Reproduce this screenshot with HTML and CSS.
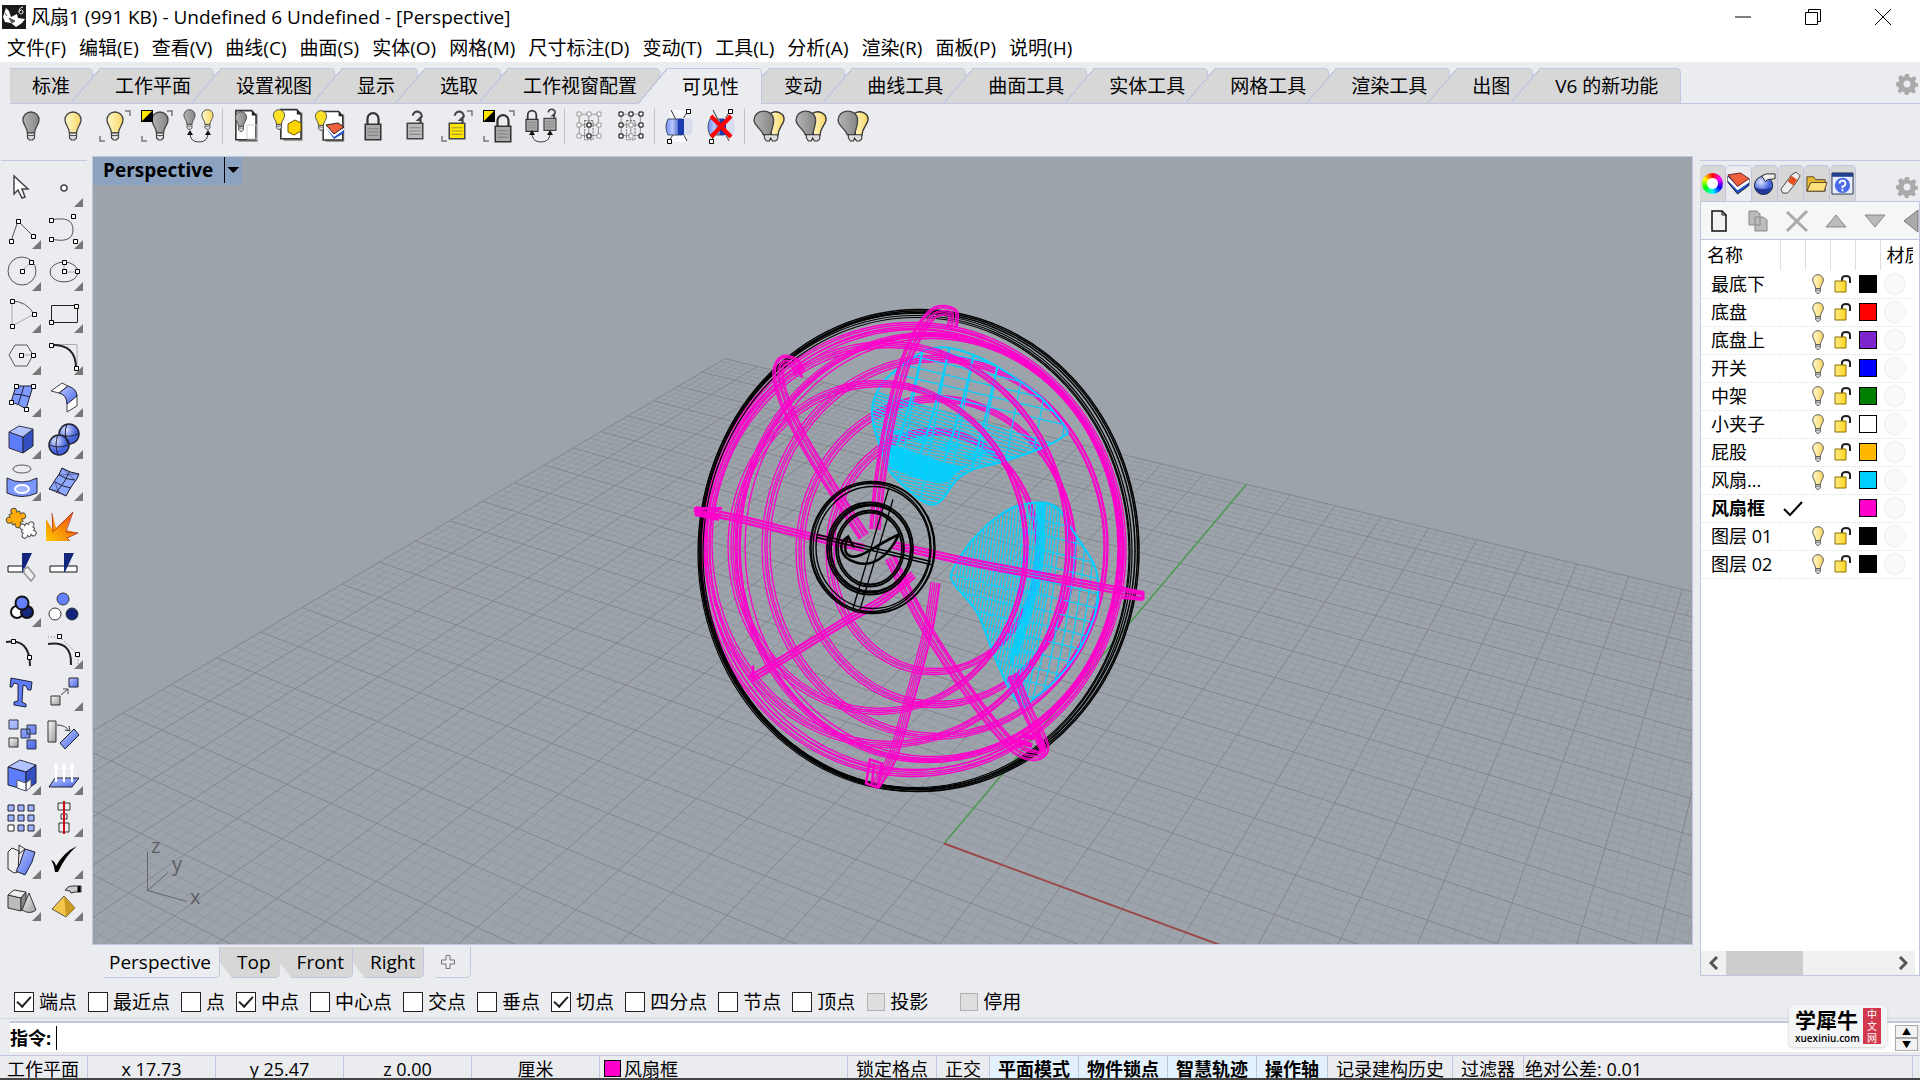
FILE: index.html
```
<!DOCTYPE html>
<html lang="zh-CN">
<head>
  <meta charset="UTF-8" />
  <meta name="viewport" content="width=device-width, initial-scale=1.0"/>
  <title>风扇1 (991 KB) - Undefined 6 Undefined - [Perspective]</title>
  <link rel="stylesheet" href="styles.css">
</head>
<body>
<!-- shared icon parts -->
<svg class="sprite" aria-hidden="true">
  <defs>
    <linearGradient id="g-on"><stop offset="0" stop-color="#fff8cc"/><stop offset="1" stop-color="#f8d765"/></linearGradient>
    <linearGradient id="g-off"><stop offset="0" stop-color="#b4b4b4"/><stop offset="1" stop-color="#868686"/></linearGradient>
    <linearGradient id="g-blue" x2="1" y2="1"><stop offset="0" stop-color="#b9c8ff"/><stop offset="1" stop-color="#4a68e8"/></linearGradient>
    <linearGradient id="g-tube"><stop offset="0" stop-color="#6f8cff"/><stop offset=".4" stop-color="#b9c8ff"/><stop offset="1" stop-color="#1c3bb0"/></linearGradient>
    <linearGradient id="g-grey" x2="1" y2="1"><stop offset="0" stop-color="#fafafa"/><stop offset="1" stop-color="#9a9a9a"/></linearGradient>
    <linearGradient id="g-fire" x1="1" y1="0" x2="0" y2="1"><stop offset="0" stop-color="#f04010"/><stop offset="1" stop-color="#ffc800"/></linearGradient>
    <linearGradient id="g-gold"><stop offset="0" stop-color="#ffe98a"/><stop offset="1" stop-color="#ffd51c"/></linearGradient>
    <radialGradient id="g-ball" cx=".35" cy=".3"><stop offset="0" stop-color="#dfe6ff"/><stop offset="1" stop-color="#4563dd"/></radialGradient>
    <symbol id="pt" viewBox="0 0 5 5"><path d="M.5.5h4v4h-4z" fill="#fff" stroke="#000"/></symbol>
    <symbol id="bulb" viewBox="0 0 18 30"><path d="M9 1C4.500 1 1 4.500 1 9c0 4.500 4 7 4.500 13h7C13 16 17 13.500 17 9c0-4.500-3.500-8-8-8z" stroke="#444" stroke-width="1.300"/><path d="M5.500 22h7v5l-2 2h-3l-2-2z" fill="#ddd" stroke="#444" stroke-width="1.200"/><path d="M6 24.500h6" stroke="#555"/></symbol>
    <symbol id="lock" viewBox="0 0 16 28"><path d="M3 13V7a5 5 0 0 1 10 0v6" fill="none" stroke="#333" stroke-width="2"/><path d="M1 12h14v14H1z" stroke="#333" stroke-width="1.400"/><path d="M3 16h10M3 19h10M3 22h10" stroke="#666" opacity=".6"/></symbol>
    <symbol id="unlock" viewBox="0 0 16 28"><path d="M13 13V9h-2l3-3a4 4 0 0 0-8-1" fill="none" stroke="#444" stroke-width="2"/><path d="M1 12h14v14H1z" stroke="#444" stroke-width="1.400"/><path d="M3 16h10M3 19h10M3 22h10" stroke="#666" opacity=".6"/></symbol>
    <symbol id="page" viewBox="0 0 24 32"><path d="M4 4h18v27H4z" fill="#999"/><path d="M1.500 1.500h15l4 4.500v23h-19z" fill="#fff" stroke="#333" stroke-width="1.500"/><path d="M16.500 1.500V6h4z" fill="#222"/></symbol>
    <symbol id="corners" viewBox="0 0 32 34"><path d="M26 2h5v5M6 32H1v-5" fill="none" stroke="#777" stroke-width="1.500"/></symbol>
    <symbol id="invert" viewBox="0 0 12 12"><path d="M0 0h12v12H0z"/><path d="M1 1h10L1 11z" fill="#ffe600"/></symbol>
    <symbol id="swap" viewBox="0 0 24 14"><path d="M3 3q0 9 9 9t9-9" fill="none" stroke="#444"/><path d="M3 0l3 5H0zM21 0l3 5h-6z" fill="#111"/></symbol>
    <symbol id="cage" viewBox="0 0 30 30"><path d="M3 3h18v20H3zM3 13h18M12 3v20" fill="none" stroke="#999"/><path d="M8 9h8v18H8z" fill="none" stroke="#777" stroke-dasharray="2 1"/></symbol>
    <symbol id="tube" viewBox="0 0 32 34"><path d="M16 9h12q4 8 0 17H16z" fill="#d8dcec"/><path d="M5 10h14v16H5q-4-8 0-16z" fill="url(#g-tube)" stroke="#456"/><path d="M15 10h6v16h-6z" fill="#1c3bb0"/></symbol>
    <symbol id="duo" viewBox="0 0 32 32"><path d="M16 5c6-5 15-1 14 6-1 5-5 6-6 15h-6z" fill="url(#g-on)" stroke="#333" stroke-width="1.300"/><path d="M10 2C5 2 1 6 1 11c0 5 7 8 9 14h7c1-6 3-8 3-14 0-6-5-9-10-9z" fill="url(#g-off)" stroke="#444" stroke-width="1.300"/><path d="M11 25h13v4l-2 2h-3l-2-3-1 3h-3l-2-3z" fill="#ddd" stroke="#333"/></symbol>
    <symbol id="gear" viewBox="0 0 22 22"><path d="M9 1h4l.5 3 2 .8L18 3l2.500 2.500L19 8l.8 2 2.200.4v3l-2.500.6-1 2 1.500 2.400-2.500 2.200-2.500-1.500-2 .8L12 22H9l-.6-2.600-2-.8L4 20.500 1.500 18 3 15.500 2 13.500 0 13V9.500L2.500 9l.8-2L2 4.500 4.500 2 7 3.800l1.500-.6z" fill="#aaa" fill-rule="evenodd"/><circle cx="11" cy="11" r="3.500" fill="#ebecf0"/></symbol>
    <symbol id="sunlock" viewBox="0 0 18 20"><path d="M8 7V5c0-4 8-4 8 0v4" fill="none" stroke="#222" stroke-width="2"/><path d="M1 7h11v11H1z" fill="url(#g-gold)" stroke="#8a7000"/></symbol>
    <g id="piece"><path d="M-5-5H5V5H-5z"/><circle cy="-7" r="2.500"/><circle cy="7" r="2.500"/><circle cx="-7" r="2.500"/><circle cx="7" r="2.500"/></g>
  </defs>
</svg>

<div class="app">
  <header class="title-bar">
    <svg class="app-icon" viewBox="0 0 24 24"><path d="M0 0h24v24H0z" fill="#1a1a1a"/><path d="M1 12L4 3l3 3 2 6 6-3 1 4 7 1-3 4-6 4-5-4-6-1z" fill="#fff"/><path d="M7 13l6 3-3 2zM3 8l2 3" fill="#555" stroke="#555"/><path d="M21 2c-3 0-4 3-4 5s4 3 4 0-3-2-4 0" fill="none" stroke="#fff"/></svg>
    <h1>风扇1 (991 KB) - Undefined 6 Undefined - [Perspective]</h1>
    <div class="window-buttons">
      <button aria-label="最小化"><svg viewBox="0 0 16 16"><path d="M0 8h16"/></svg></button>
      <button aria-label="还原"><svg viewBox="0 0 16 16"><path d="M.5 3.500h12v12H.5zM3.500 3.500v-3h12v12h-3"/></svg></button>
      <button aria-label="关闭"><svg viewBox="0 0 16 16"><path d="M0 0l16 16M16 0L0 16"/></svg></button>
    </div>
  </header>

  <nav class="menu-bar">
    <button>文件(F)</button><button>编辑(E)</button><button>查看(V)</button><button>曲线(C)</button><button>曲面(S)</button><button>实体(O)</button><button>网格(M)</button><button>尺寸标注(D)</button><button>变动(T)</button><button>工具(L)</button><button>分析(A)</button><button>渲染(R)</button><button>面板(P)</button><button>说明(H)</button>
  </nav>

  <div class="toolbar-area">
    <div class="toolbar-tabs">
      <button>标准</button><button>工作平面</button><button>设置视图</button><button>显示</button><button>选取</button><button>工作视窗配置</button><button class="active">可见性</button><button>变动</button><button>曲线工具</button><button>曲面工具</button><button>实体工具</button><button>网格工具</button><button>渲染工具</button><button>出图</button><button>V6 的新功能</button>
      <svg class="gear"><use href="#gear"/></svg>
    </div>
    <div class="toolbar">
      <button aria-label="隐藏"><svg viewBox="0 0 36 36"><use href="#bulb" x="8" y="3" width="20" height="30" fill="url(#g-off)"/></svg></button>
      <button aria-label="显示"><svg viewBox="0 0 36 36"><use href="#bulb" x="8" y="3" width="20" height="30" fill="url(#g-on)"/></svg></button>
      <button aria-label="显示选取"><svg viewBox="0 0 36 36"><use href="#corners" x="2" y="1" width="32" height="34"/><use href="#bulb" x="8" y="3" width="20" height="30" fill="url(#g-on)"/></svg></button>
      <button aria-label="隐藏未选取"><svg viewBox="0 0 36 36"><use href="#corners" x="2" y="1" width="32" height="34"/><use href="#bulb" x="11" y="3" width="20" height="30" fill="url(#g-off)"/><use href="#invert" x="2" y="2" width="12" height="12"/></svg></button>
      <button aria-label="对调隐藏"><svg viewBox="0 0 36 36"><use href="#bulb" x="2" y="1" width="13" height="21" fill="url(#g-off)"/><use href="#bulb" x="20" y="1" width="13" height="21" fill="url(#g-on)"/><use href="#swap" x="6" y="22" width="24" height="14"/></svg></button>
      <i></i>
      <button aria-label="在图纸隐藏"><svg viewBox="0 0 36 36"><use href="#page" x="5" y="1" width="26" height="34"/><path d="M18 17h10v14H18z" fill="none" stroke="#ccc"/><use href="#bulb" x="5" y="3" width="14" height="21" fill="url(#g-off)"/></svg></button>
      <button aria-label="在图纸显示"><svg viewBox="0 0 36 36"><use href="#page" x="7" y="0" width="28" height="34"/><path d="M17 16l7-4 6 3v8l-7 4-6-3z" fill="#ffd500" stroke="#665500"/><use href="#bulb" x="1" y="1" width="14" height="21" fill="#ffe228"/></svg></button>
      <button aria-label="图层显示"><svg viewBox="0 0 36 36"><use href="#page" x="7" y="2" width="28" height="33"/><path d="M13 17l12-2 6 4-10 7z" fill="#f0603c" stroke="#222"/><path d="M13 18l8 9 10-7v2l-10 7z" fill="#fff"/><path d="M13 20l8 9 10-7v3l-10 6z" fill="#2350c8"/><use href="#bulb" x="1" y="2" width="14" height="21" fill="#ffe228"/></svg></button>
      <button aria-label="锁定"><svg viewBox="0 0 36 36"><use href="#lock" x="9" y="3" width="18" height="31" fill="#aaa"/></svg></button>
      <button aria-label="解除锁定"><svg viewBox="0 0 36 36"><use href="#unlock" x="9" y="2" width="18" height="31" fill="#bbb"/></svg></button>
      <button aria-label="解除选取锁定"><svg viewBox="0 0 36 36"><use href="#corners" x="2" y="1" width="32" height="34"/><use href="#unlock" x="9" y="2" width="18" height="31" fill="#ffe600"/></svg></button>
      <button aria-label="锁定未选取"><svg viewBox="0 0 36 36"><use href="#corners" x="2" y="1" width="32" height="34"/><use href="#lock" x="13" y="5" width="18" height="31" fill="#aaa"/><use href="#invert" x="2" y="2" width="12" height="12"/></svg></button>
      <button aria-label="对调锁定"><svg viewBox="0 0 36 36"><use href="#lock" x="2" y="1" width="14" height="24" fill="#aaa"/><use href="#unlock" x="20" y="0" width="14" height="24" fill="#aaa"/><use href="#swap" x="6" y="22" width="24" height="14"/></svg></button>
      <i></i>
      <button aria-label="隐藏控制点"><svg viewBox="0 0 36 36"><use href="#cage" x="5" y="3" width="32" height="32"/><g fill="#fff" stroke="#999"><path d="M6 4h4v4H6zM16 4h4v4h-4zM26 4h4v4h-4zM6 15h4v4H6zM26 15h4v4h-4zM6 26h4v4H6zM26 26h4v4h-4z"/><path d="M16 15h4v4h-4zM16 26h4v4h-4z" stroke="#000"/></g></svg></button>
      <button aria-label="显示控制点"><svg viewBox="0 0 36 36"><use href="#cage" x="5" y="3" width="32" height="32"/><g fill="#fff" stroke="#000"><path d="M6 4h4v4H6zM16 4h4v4h-4zM26 4h4v4h-4zM6 15h4v4H6zM26 15h4v4h-4zM6 26h4v4H6zM26 26h4v4h-4z"/><path d="M16 15h4v4h-4zM16 26h4v4h-4z" stroke="#999"/></g></svg></button>
      <i></i>
      <button aria-label="截平面"><svg viewBox="0 0 36 36"><path d="M8 2h18v32H8z" fill="#fff" opacity=".7"/><path d="M27 3L8 33M10 2l16 31" fill="none" stroke="#333"/><use href="#tube" x="2" y="1" width="32" height="34"/><use href="#pt" x="25" y="1" width="5" height="5"/><use href="#pt" x="6" y="31" width="5" height="5"/></svg></button>
      <button aria-label="停用截平面"><svg viewBox="0 0 36 36"><path d="M27 3L8 33M10 2l16 31" fill="none" stroke="#333"/><use href="#tube" x="2" y="1" width="32" height="34"/><use href="#pt" x="25" y="1" width="5" height="5"/><use href="#pt" x="6" y="31" width="5" height="5"/><path d="M8 8l20 21M28 8L8 29" stroke="#f00" stroke-width="4"/></svg></button>
      <i></i>
      <button aria-label="隔离"><svg viewBox="0 0 36 36"><use href="#duo" x="2" y="1" width="33" height="33"/></svg></button>
      <button aria-label="取消隔离"><svg viewBox="0 0 36 36"><use href="#duo" x="2" y="1" width="33" height="33"/></svg></button>
      <button aria-label="隔离锁定"><svg viewBox="0 0 36 36"><use href="#duo" x="2" y="1" width="33" height="33"/></svg></button>
    </div>
  </div>

  <main class="workspace">
    <aside class="palette">
      <button aria-label="选取"><svg viewBox="0 0 36 36"><path d="M10 6v18l4-4 4 8 3-1-3-8h6z" fill="#fff" stroke="#444" stroke-width="1.500"/></svg></button>
      <button class="more" aria-label="点"><svg viewBox="0 0 36 36"><circle cx="18" cy="18" r="3" fill="#fff" stroke="#444" stroke-width="1.500"/></svg></button>
      <button class="more" aria-label="多重直线"><svg viewBox="0 0 36 36"><path d="M7 29L14 9l15 15" class="ln"/><use href="#pt" x="5" y="27" width="5" height="5"/><use href="#pt" x="12" y="7" width="5" height="5"/><use href="#pt" x="27" y="22" width="5" height="5"/></svg></button>
      <button class="more" aria-label="控制点曲线"><svg viewBox="0 0 36 36"><path d="M5 8C20 5 27 8 27 18S18 30 5 27" class="ln"/><use href="#pt" x="3" y="6" width="5" height="5"/><use href="#pt" x="3" y="25" width="5" height="5"/><use href="#pt" x="25" y="2" width="5" height="5"/><use href="#pt" x="27" y="27" width="5" height="5"/></svg></button>
      <button class="more" aria-label="圆"><svg viewBox="0 0 36 36"><circle cx="18" cy="17" r="14" class="ln"/><path d="M18 17l9-9" stroke="#aaa"/><use href="#pt" x="16" y="15" width="5" height="5"/><use href="#pt" x="25" y="6" width="5" height="5"/></svg></button>
      <button class="more" aria-label="椭圆"><svg viewBox="0 0 36 36"><ellipse cx="18" cy="18" rx="14" ry="10" class="ln"/><path d="M18 8v10h14" class="ln thin"/><use href="#pt" x="16" y="6" width="5" height="5"/><use href="#pt" x="16" y="15" width="5" height="5"/><use href="#pt" x="29" y="15" width="5" height="5"/></svg></button>
      <button class="more" aria-label="圆弧"><svg viewBox="0 0 36 36"><path d="M8 5v25l22-12" class="ln thin"/><path d="M8 5q14 0 22 13" class="ln"/><use href="#pt" x="6" y="3" width="5" height="5"/><use href="#pt" x="28" y="16" width="5" height="5"/><use href="#pt" x="6" y="28" width="5" height="5"/></svg></button>
      <button class="more" aria-label="矩形"><svg viewBox="0 0 36 36"><path d="M5.500 9.500h26v17h-26z" fill="none" stroke="#222"/><use href="#pt" x="3" y="24" width="5" height="5"/><use href="#pt" x="28" y="8" width="5" height="5"/></svg></button>
      <button class="more" aria-label="多边形"><svg viewBox="0 0 36 36"><path d="M11 7h12l6 10-6 11H11L5 17z" class="ln"/><path d="M17 17h12" stroke="#aaa"/><use href="#pt" x="15" y="15" width="5" height="5"/><use href="#pt" x="27" y="15" width="5" height="5"/></svg></button>
      <button class="more" aria-label="圆角"><svg viewBox="0 0 36 36"><path d="M5 6.500h26V30" class="ln thin"/><path d="M5 7q25-1 25 23" fill="none" stroke="#222" stroke-width="2"/><use href="#pt" x="3" y="5" width="5" height="5"/><use href="#pt" x="28" y="28" width="5" height="5"/></svg></button>
      <button class="more" aria-label="曲面"><svg viewBox="0 0 36 36"><path d="M12 6h17l-7 23q-7-5-15-7z" fill="#7e9aff" stroke="#223"/><path d="M20 6l-6 19M9 14q8 0 17 3" fill="none" stroke="#223"/><use href="#pt" x="10" y="4" width="5" height="5"/><use href="#pt" x="27" y="4" width="5" height="5"/><use href="#pt" x="20" y="27" width="5" height="5"/><use href="#pt" x="5" y="20" width="5" height="5"/></svg></button>
      <button class="more" aria-label="曲面圆角"><svg viewBox="0 0 36 36"><path d="M5 11l11-8 6 3-9 7zM21 23l10-8v11l-10 6z" fill="#fff" stroke="#444"/><path d="M13 13l9-7q9 3 9 10l-10 8q0-9-8-11z" fill="url(#g-blue)" stroke="#223"/></svg></button>
      <button class="more" aria-label="立方体"><svg viewBox="0 0 36 36"><path d="M5 10l14 5v16L5 26z" fill="#5c7cfa" stroke="#334"/><path d="M19 15l10-8v17l-10 7z" fill="#3450c0" stroke="#223"/><path d="M5 10l10-6 14 3-10 8z" fill="#b3c3ff" stroke="#334"/></svg></button>
      <button class="more" aria-label="布尔并集"><svg viewBox="0 0 36 36"><g fill="url(#g-ball)" stroke="#223" stroke-width="1.500"><circle cx="23" cy="12" r="10"/><circle cx="13" cy="23" r="10"/></g><path d="M14 13q8 3 18-1M21 2q-4 10 1 20M4 23q8 4 18 0M12 13q-4 9 0 20" fill="none" stroke="#223"/></svg></button>
      <button class="more" aria-label="投影曲线"><svg viewBox="0 0 36 36"><ellipse cx="18" cy="5" rx="9" ry="4" class="ln"/><path d="M3 14q15 8 30 0v15q-15 7-30 0z" fill="#7c98ff" stroke="#223"/><ellipse cx="18" cy="25" rx="7" ry="4" fill="#9fb3ff" stroke="#fff" stroke-width="2"/></svg></button>
      <button class="more" aria-label="网格"><svg viewBox="0 0 36 36"><path d="M16 4q8 5 17 6-2 6-6 10-4 6-7 12-7-5-17-7 4-5 6-9 5-6 7-12z" fill="#8ea8ff" stroke="#112"/><path d="M13 11q8 5 16 5M9 18q8 5 16 6M24 7l-6 11-8 11" fill="none" stroke="#223"/><path d="M16 4l13 12M33 10l-20 1M3 25l17 7M9 18l4 12" fill="none" stroke="#446" stroke-width=".7"/></svg></button>
      <button aria-label="组合"><svg viewBox="0 0 36 36"><g transform="translate(12 12) rotate(-18)"><use href="#piece" stroke="#554" stroke-width="2"/><use href="#piece" fill="#ffab0a"/></g><g transform="translate(24 24) rotate(30) scale(.9)"><use href="#piece" stroke="#444" stroke-width="2"/><use href="#piece" fill="#fff"/></g></svg></button>
      <button aria-label="炸开"><svg viewBox="0 0 36 36"><path d="M0 35V13l6 10V7l4 15L27 6l-7 18 12 3-11 5 3 3z" fill="url(#g-fire)"/><path d="M6 7l1 19L27 6l-7 20 12 1-11 5 3 3" fill="none" stroke="#a33" stroke-width=".8"/></svg></button>
      <button aria-label="修剪"><svg viewBox="0 0 36 36"><path d="M4 18h16v6H4z" fill="#fff" stroke="#111"/><path d="M18 5h10l-9 19h-1z" fill="#12267c"/><path d="M20 21l4-2 7 9-4 5-7-8z" fill="#eee" stroke="#999" stroke-width="1.500"/></svg></button>
      <button aria-label="分割"><svg viewBox="0 0 36 36"><path d="M4 18h27v6H4z" fill="#fff" stroke="#111"/><path d="M18 5h10l-9 19h-1z" fill="#12267c"/></svg></button>
      <button class="more" aria-label="群组"><svg viewBox="0 0 36 36"><g stroke="#111" stroke-width="2"><circle cx="13" cy="22" r="6" fill="#fff"/><circle cx="23" cy="22" r="6" fill="#12267c"/><circle cx="18" cy="13" r="6.500" fill="#6480ff"/></g></svg></button>
      <button aria-label="解散群组"><svg viewBox="0 0 36 36"><g stroke="#333"><circle cx="9" cy="24" r="6" fill="#fff"/><circle cx="26" cy="24" r="6" fill="#12267c"/><circle cx="17" cy="9" r="6" fill="#6480ff"/></g></svg></button>
      <button aria-label="编辑点"><svg viewBox="0 0 36 36"><path d="M2 10q24-4 24 24" fill="none" stroke="#222" stroke-width="2"/><use href="#pt" x="7" y="7" width="5" height="5"/><use href="#pt" x="23" y="23" width="5" height="5"/></svg></button>
      <button class="more" aria-label="控制点"><svg viewBox="0 0 36 36"><path d="M2 12q24-4 23 21" fill="none" stroke="#222" stroke-width="2"/><path d="M2 5h12l18 18v11" fill="none" stroke="#777" stroke-dasharray="1 2"/><use href="#pt" x="11" y="2" width="5" height="5"/><use href="#pt" x="29" y="20" width="5" height="5"/></svg></button>
      <button aria-label="文字"><svg viewBox="0 0 36 36"><path d="M7 4l21 4-1 8h-3l-2-4-3-1-1 17 4 2v3l-12-2v-3l4-1V10L10 9l-2 4H6z" fill="#5c7cfa" stroke="#223"/></svg></button>
      <button class="more" aria-label="移动"><svg viewBox="0 0 36 36"><path d="M5 22h9v9H5z" fill="url(#g-grey)" stroke="#333"/><path d="M23 4h9v9h-9z" fill="url(#g-blue)" stroke="#223"/><path d="M15 21l7-6m-5 0h5v5" fill="none" stroke="#444"/></svg></button>
      <button aria-label="阵列"><svg viewBox="0 0 36 36"><g fill="url(#g-blue)" stroke="#334"><path d="M5 4h9v9H5zM23 9h9v9h-9zM17 13h9v9h-9zM23 24h9v9h-9z"/></g><path d="M5 22h9v9H5z" fill="url(#g-grey)" stroke="#333"/></svg></button>
      <button aria-label="旋转"><svg viewBox="0 0 36 36"><path d="M2 5h8v21H2z" fill="url(#g-grey)" stroke="#333"/><path d="M28 13l5 6-14 14-5-6z" fill="url(#g-blue)" stroke="#223"/><path d="M11 9q9 0 12 6m-4-1l5 1-1-5" fill="none" stroke="#444"/></svg></button>
      <button class="more" aria-label="实体编辑"><svg viewBox="0 0 36 36"><path d="M4 9l12-7 16 5-10 7z" fill="#b3c3ff" stroke="#334"/><path d="M4 9l18 5v18L4 27z" fill="#5c7cfa" stroke="#223"/><path d="M22 14l10-7v18l-10 7z" fill="#3450c0" stroke="#223"/><path d="M13 22l9 3v8l-9-3zM22 25l5-4v8l-5 4z" fill="#fff" stroke="#556"/></svg></button>
      <button class="more" aria-label="挤出"><svg viewBox="0 0 36 36"><path d="M9 20h24l-7 9H3z" fill="url(#g-blue)" stroke="#223"/><path d="M10 24V7M18 24V7M26 24V7" stroke="#fff" stroke-width="2"/><path d="M7 11l3-7 3 7zM15 11l3-7 3 7zM23 11l3-7 3 7z" fill="#fff"/></svg></button>
      <button class="more" aria-label="矩形阵列"><svg viewBox="0 0 36 36"><g fill="#9fb3ff" stroke="#223"><path d="M4 5h6v6H4zM14 5h6v6h-6zM24 5h6v6h-6zM4 15h6v6H4zM14 15h6v6h-6zM24 15h6v6h-6zM14 25h6v6h-6zM24 25h6v6h-6z"/></g><path d="M4 25h6v6H4z" fill="#fff" stroke="#222"/></svg></button>
      <button class="more" aria-label="对齐"><svg viewBox="0 0 36 36"><g fill="#eee" stroke="#333"><path d="M12 3h12v7H12zM15 14h6v5h-6zM13 23h10v9H13z"/></g><path d="M18 1v33" stroke="#c8101c" stroke-width="2"/></svg></button>
      <button class="more" aria-label="变形"><svg viewBox="0 0 36 36"><path d="M4 10l4-4 7 3-1 21-4 1-6-4zM15 3l6 4-6 5z" fill="#eee" stroke="#333"/><path d="M21 7l10 3-3 10-7 13-9-4q5-8 6-14z" fill="url(#g-blue)" stroke="#223"/></svg></button>
      <button class="more" aria-label="检查"><svg viewBox="0 0 36 36"><path d="M5 18q4 1 5 6Q18 10 31 4q-11 9-19 26h-3q-1-8-4-12z"/></svg></button>
      <button class="more" aria-label="网格实体"><svg viewBox="0 0 36 36"><path d="M4 11l13 3v13L4 24z" fill="#bbb" stroke="#333"/><path d="M4 11l6-5 12 2-5 6z" fill="#eee" stroke="#333"/><path d="M17 14l5-6v12l-5 7z" fill="#888" stroke="#333"/><path d="M25 9l7 17q-6 5-14 0z" fill="url(#g-grey)" stroke="#333"/></svg></button>
      <button class="more" aria-label="金字塔"><svg viewBox="0 0 36 36"><path d="M18 12l11 12-9 9-14-8z" fill="#f3c64c" stroke="#554"/><path d="M18 12l2 21 9-9z" fill="#c89a22"/><path d="M19 6q4-5 8-4h8v6h-6l-4 1-1-2z" fill="#ccc" stroke="#333"/><path d="M33 2v6" stroke="#000" stroke-width="3"/></svg></button>
    </aside>

    <section class="viewport-area">
      <div class="viewport">
        <svg id="scene" viewBox="93 157 1599 788" preserveAspectRatio="xMidYMid slice"></svg>
        <div class="viewport-title"><span>Perspective</span><button aria-label="工作视窗菜单"></button></div>
      </div>
      <div class="viewport-tabs">
        <button class="active">Perspective</button><button>Top</button><button>Front</button><button>Right</button><button class="add" aria-label="新增"><svg viewBox="0 0 14 14"><path d="M5 .5h4V5h4.500v4H9v4.500H5V9H.5V5H5z" fill="none" stroke="#777"/></svg></button>
      </div>
    </section>

    <aside class="panel">
      <div class="panel-tabs">
        <button aria-label="属性"><span class="wheel"></span></button>
        <button class="active" aria-label="图层"><svg viewBox="0 0 24 24"><path d="M1 4l22 3v7l-12 9L1 11z" fill="#2350c8" stroke="#222"/><path d="M1 5l10 10 12-8v4l-12 8L1 9z" fill="#fff"/><path d="M1 3l13-2 9 6-12 8z" fill="#f0603c" stroke="#622"/></svg></button>
        <button aria-label="渲染"><svg viewBox="0 0 24 24"><circle cx="11" cy="14" r="9.500" fill="url(#g-ball)" stroke="#123"/><path d="M2 16q9 4 18 0-2 7-9 7t-9-7" fill="#12267c" opacity=".7"/><path d="M9 4q6-3 8-2h6v5l-8 1-2 2z" fill="#eee" stroke="#222"/></svg></button>
        <button aria-label="材质"><svg viewBox="0 0 24 24"><path d="M13 3l5-3 4 4-4 7-9 11-5 0-2-4z" fill="#eee" stroke="#444"/><path d="M13 4l6 4-4 6-6-4z" fill="#e05020"/></svg></button>
        <button aria-label="图库"><svg viewBox="0 0 24 24"><path d="M2 5h7l2 3h10v12H2z" fill="#e8b830" stroke="#543"/><path d="M6 11h17l-3 9H2z" fill="#ffe27a" stroke="#543"/></svg></button>
        <button aria-label="说明"><svg viewBox="0 0 24 24"><path d="M1 1h22v22H1z" fill="#e8ecff" stroke="#234"/><path d="M1 1h22v4H1z" fill="#23408c"/><circle cx="12" cy="14" r="8" fill="#4a6be8"/><path d="M9 12q0-3 3-3t3 3-3 3v2M12 18v2" fill="none" stroke="#fff" stroke-width="2"/></svg></button>
        <svg class="gear"><use href="#gear"/></svg>
      </div>
      <div class="panel-box">
        <div class="layer-tools">
          <button aria-label="新图层"><svg viewBox="0 0 24 24"><path d="M5 2h10l4 4v16H5z" fill="#f2f2f2" stroke="#111" stroke-width="1.500"/><path d="M15 2v4h4" fill="none" stroke="#111"/></svg></button>
          <button aria-label="新子图层"><svg viewBox="0 0 24 24"><path d="M3 2h8l3 3v11H3zM9 8h8l4 3v11H9z" fill="#bbb" stroke="#888"/></svg></button>
          <button aria-label="删除"><svg viewBox="0 0 24 24"><path d="M2 3l20 19M22 2L2 22" stroke="#aaa" stroke-width="3"/></svg></button>
          <button aria-label="上移"><svg viewBox="0 0 24 24"><path d="M12 6l10 12H2z" fill="#bbb" stroke="#888"/></svg></button>
          <button aria-label="下移"><svg viewBox="0 0 24 24"><path d="M12 18L2 6h20z" fill="#bbb" stroke="#888"/></svg></button>
          <button aria-label="上一级"><svg viewBox="0 0 24 24"><path d="M2 12L16 1v22z" fill="#aaa" stroke="#777"/></svg></button>
        </div>
        <table class="layers">
          <thead><tr><th class="name">名称</th><th></th><th></th><th></th><th></th><th class="material">材质</th></tr></thead>
          <tbody id="layer-rows"></tbody>
        </table>
        <div class="scrollbar">
          <button aria-label="向左"><svg viewBox="0 0 10 14"><path d="M8 1L2 7l6 6"/></svg></button>
          <span class="track"><span class="thumb"></span></span>
          <button aria-label="向右"><svg viewBox="0 0 10 14"><path d="M2 1l6 6-6 6"/></svg></button>
        </div>
      </div>
    </aside>
  </main>

  <div class="osnap">
    <label><input type="checkbox" checked>端点</label>
    <label><input type="checkbox">最近点</label>
    <label><input type="checkbox">点</label>
    <label><input type="checkbox" checked>中点</label>
    <label><input type="checkbox">中心点</label>
    <label><input type="checkbox">交点</label>
    <label><input type="checkbox">垂点</label>
    <label><input type="checkbox" checked>切点</label>
    <label><input type="checkbox">四分点</label>
    <label><input type="checkbox">节点</label>
    <label><input type="checkbox">顶点</label>
    <label class="project"><input type="checkbox" disabled>投影</label>
    <label><input type="checkbox" disabled>停用</label>
  </div>

  <div class="command">
    <label for="command-input">指令:</label>
    <span class="caret"></span>
    <input type="text" id="command-input">
    <div class="spinner"><button aria-label="上">▲</button><button aria-label="下">▼</button></div>
    <div class="watermark">
      <div><b>学犀牛</b><small>xuexiniu.com</small></div>
      <em>中<br>文<br>网</em>
    </div>
  </div>

  <footer class="status">
    <button>工作平面</button><span class="coord">x 17.73</span><span class="coord">y 25.47</span><span class="coord">z 0.00</span><span class="coord">厘米</span><span class="layer"><i></i>风扇框</span><button>锁定格点</button><button>正交</button><button class="on">平面模式</button><button class="on">物件锁点</button><button class="on">智慧轨迹</button><button class="on">操作轴</button><button>记录建构历史</button><button>过滤器</button><span class="tolerance">绝对公差: 0.01</span>
  </footer>
</div>
<script src="scene.js"></script>
</body>
</html>
```
FILE: styles.css
```
* {
  box-sizing: border-box;
}

body {
  margin: 0;
  height: 100vh;
  overflow: hidden;
  background-color: #ebecf0;
  color: #000;
  font-family: "Open Sans", "Noto Sans CJK SC", sans-serif;
  font-size: 19px;
  line-height: 24px;
}

button {
  margin: 0;
  padding: 0;
  border: 0;
  background: none;
  color: inherit;
  font: inherit;
  white-space: nowrap;
}

svg {
  display: block;
}

.sprite {
  position: absolute;
  width: 0;
  height: 0;
}

.app {
  display: flex;
  flex-direction: column;
  height: 100vh;
}

/* title and menu */
.title-bar {
  display: flex;
  align-items: center;
  height: 34px;
  padding-left: 2px;
  background-color: #fff;
}

.app-icon {
  width: 24px;
  height: 24px;
}

.title-bar h1 {
  flex: 1;
  margin: 0 0 0 5px;
  font-size: 19px;
  font-weight: normal;
}

.window-buttons {
  display: flex;
  margin-right: 2px;
}

.window-buttons button {
  display: grid;
  place-items: center;
  width: 70px;
  height: 34px;
}

.window-buttons svg {
  width: 16px;
  height: 16px;
  fill: none;
  stroke: #000;
}

.menu-bar {
  display: flex;
  gap: 13px;
  height: 28px;
  padding-left: 7px;
  background-color: #fff;
}

/* toolbar */
.toolbar-area {
  height: 94px;
  margin-left: 5px;
  padding: 6px 0 0 5px;
}

.toolbar-tabs {
  display: flex;
  height: 36px;
  border-bottom: 1px solid #c0c6dd;
}

.toolbar-tabs button {
  position: relative;
  height: 35px;
  padding: 0 22px;
  border-top: 1px solid #c0c6dd;
  border-right: 1px solid #c0c6dd;
  border-top-right-radius: 5px;
  background-color: #d7d7d7;
}

.toolbar-tabs button + button {
  margin-left: 8px;
  padding-left: 14px;
}

.toolbar-tabs button + button::before {
  content: "";
  position: absolute;
  left: -30px;
  top: -1px;
  width: 30px;
  height: 35px;
  background: linear-gradient(to bottom right, transparent 48%, #c0c6dd 48%, #c0c6dd 51%, #d7d7d7 51%);
}

.toolbar-tabs .active {
  z-index: 1;
  height: 36px;
  background-color: #ebecf0;
}

.toolbar-tabs button.active::before {
  height: 36px;
  background: linear-gradient(to bottom right, transparent 48%, #c0c6dd 48%, #c0c6dd 51%, #ebecf0 51%);
}

.gear {
  width: 22px;
  height: 22px;
  margin: 5px 2px 0 auto;
}

.toolbar {
  display: flex;
  align-items: center;
  height: 44px;
}

.toolbar button {
  display: grid;
  place-items: center;
  width: 42px;
  height: 42px;
}

.toolbar svg,
.palette svg {
  width: 36px;
  height: 36px;
}

.toolbar i {
  width: 1px;
  height: 36px;
  margin: 0 3px 0 2px;
  background-color: #c4c4c8;
}

/* workspace */
.workspace {
  flex: 1;
  display: grid;
  grid-template-columns: 92px 1fr 220px;
  column-gap: 7px;
  min-height: 0;
}

.palette {
  display: grid;
  grid-template-columns: 42px 42px;
  grid-auto-rows: 42px;
  margin: 4px 0 0 1px;
  padding-top: 6px;
  border-top: 1px solid #c0cbe0;
  align-content: start;
  width: 86px;
}

.palette button {
  position: relative;
  display: grid;
  place-items: center;
}

.palette .more::after {
  content: "";
  position: absolute;
  right: 2px;
  bottom: 2px;
  width: 9px;
  height: 9px;
  background-color: #777;
  clip-path: polygon(100% 0, 100% 100%, 0 100%);
}

.ln {
  fill: none;
  stroke: #555;
}

.thin {
  stroke: #aaa;
}

.viewport-area {
  display: flex;
  flex-direction: column;
  margin-left: -7px;
  min-width: 0;
  min-height: 0;
}

.viewport {
  position: relative;
  flex: 1;
  min-height: 0;
  border: 1px solid #c0c6dd;
  background-color: #9da3aa;
}

#scene {
  width: 100%;
  height: 100%;
}

.viewport-title {
  position: absolute;
  left: 0;
  top: 0;
  display: flex;
  height: 28px;
  padding-left: 10px;
  background-color: #8ba3c1;
  font-weight: bold;
  line-height: 26px;
}

.viewport-title button {
  width: 18px;
  height: 26px;
  margin-left: 11px;
  border-left: 1px solid #000;
}

.viewport-title button::before {
  content: "";
  display: block;
  width: 12px;
  height: 6px;
  margin-left: 2px;
  background-color: #000;
  clip-path: polygon(0 0, 100% 0, 50% 100%);
}

.viewport-tabs {
  display: flex;
  height: 34px;
  padding-top: 2px;
}

.viewport-tabs button {
  position: relative;
  height: 31px;
  padding: 0 8px 0 17px;
  border-right: 1px solid #c0c6dd;
  border-bottom: 1px solid #c0c6dd;
  border-bottom-right-radius: 5px;
  background-color: #d7d7d7;
  clip-path: polygon(0 0, 100% 0, 100% 100%, 12px 100%, 0 50%);
}

.viewport-tabs .active,
.viewport-tabs .add {
  background-color: #ebecf0;
}

.viewport-tabs .add {
  padding-right: 15px;
}

.viewport-tabs svg {
  width: 14px;
  height: 14px;
}

/* layer panel */
.panel {
  display: flex;
  flex-direction: column;
  margin-top: 4px;
  padding-top: 4px;
  border-top: 1px solid #c0cbe0;
  min-width: 0;
}

.panel-tabs {
  display: flex;
  height: 36px;
}

.panel-tabs button {
  display: grid;
  place-items: center;
  width: 26px;
  border: 1px solid #c0c6dd;
  border-width: 1px 1px 0 0;
  border-radius: 5px 5px 0 0;
  background-color: #d7d7d7;
}

.panel-tabs .active {
  background-color: #ebecf0;
}

.panel-tabs button svg {
  width: 23px;
  height: 23px;
}

.panel-tabs .gear {
  margin-top: 11px;
}

.wheel {
  width: 21px;
  height: 21px;
  border-radius: 50%;
  background: radial-gradient(circle, #fff 5px, transparent 6px), conic-gradient(red, #f0f, blue, cyan, lime, yellow, red);
}

.panel-box {
  flex: 1;
  display: flex;
  flex-direction: column;
  margin-bottom: 3px;
  border: 1px solid #c0c6dd;
  background-color: #fff;
  overflow: hidden;
}

.layer-tools {
  display: flex;
  height: 38px;
  padding-left: 6px;
  gap: 15px;
  align-items: center;
  border-bottom: 1px solid #c0c6dd;
  background-color: #f5f6f8;
}

.layer-tools svg {
  width: 24px;
  height: 24px;
}

.layers {
  width: 212px;
  table-layout: fixed;
  border-collapse: collapse;
  font-size: 18px;
}

.layers th {
  width: 25px;
  height: 30px;
  padding: 0;
  border-right: 1px solid #e0e0e0;
  font-weight: normal;
  text-align: left;
}

.layers .name {
  width: 79px;
  padding-left: 6px;
}

.layers .material {
  width: 33px;
  padding-left: 6px;
  border-right: 0;
  overflow: hidden;
  white-space: nowrap;
  text-overflow: clip;
}

.layers td {
  height: 28px;
  padding: 0;
  border-bottom: 1px dotted #e0e0e0;
  white-space: nowrap;
}

.layers td:first-child {
  padding-left: 10px;
}

.layers .current td:first-child {
  font-weight: bold;
}

.layers svg {
  width: 20px;
  height: 20px;
  margin: 0 auto;
}

.swatch {
  display: block;
  width: 18px;
  height: 18px;
  margin-left: 4px;
  border: 1px solid #000;
}

.dot {
  display: block;
  width: 22px;
  height: 22px;
  margin-left: 4px;
  border: 1px solid #eee;
  border-radius: 50%;
  background-color: #fafafa;
}

.scrollbar {
  display: flex;
  height: 24px;
  margin: auto 4px 0 0;
  background-color: #f0f0f0;
}

.scrollbar button {
  display: grid;
  place-items: center;
  width: 25px;
}

.scrollbar svg {
  width: 10px;
  height: 14px;
  fill: none;
  stroke: #555;
  stroke-width: 3;
}

.track {
  flex: 1;
}

.thumb {
  display: block;
  width: 47%;
  height: 24px;
  background-color: #cdcdcd;
}

/* object snaps */
.osnap {
  display: flex;
  align-items: center;
  gap: 11px;
  height: 40px;
  padding: 6px 0 0 14px;
  border-bottom: 1px solid #d4d8e4;
}

.osnap label {
  display: flex;
  align-items: center;
  gap: 5px;
}

.osnap .project {
  margin: 0 21px 0 1px;
}

.osnap input {
  appearance: none;
  display: grid;
  place-items: center;
  width: 20px;
  height: 20px;
  margin: 0;
  border: 1px solid #222;
  background-color: #fff;
}

.osnap input:checked::before {
  content: "";
  width: 12px;
  height: 6px;
  margin-bottom: 4px;
  border: solid #222;
  border-width: 0 0 2px 2px;
  transform: rotate(-48deg);
}

.osnap input:disabled {
  width: 18px;
  height: 18px;
  border-color: #b0b0b0;
  background-color: #dedede;
}

/* command line */
.command {
  position: relative;
  display: flex;
  align-items: center;
  height: 31px;
  margin: 2px 0 3px 10px;
  border-top: 2px solid #c0c6dd;
  background-color: #fff;
}

.command label {
  font-size: 18px;
  font-weight: bold;
}

.caret {
  width: 1px;
  height: 24px;
  margin-left: 5px;
  background-color: #000;
}

.command input {
  flex: 1;
  height: 26px;
  border: 0;
  outline: 0;
  font: inherit;
}

.spinner {
  display: flex;
  flex-direction: column;
  width: 25px;
  padding: 0 2px 0 0;
  background-color: #ebecf0;
}

.spinner button {
  height: 13px;
  border: 1px solid #aaa;
  background-color: #f2f2f2;
  font-size: 9px;
  line-height: 11px;
}

.watermark {
  position: absolute;
  right: 33px;
  bottom: 5px;
  display: flex;
  gap: 3px;
  align-items: center;
  width: 98px;
  height: 42px;
  padding: 0 6px;
  border-radius: 5px;
  background-color: #f4f5f7;
  box-shadow: 0 1px 3px #ccc;
}

.watermark div {
  display: flex;
  flex-direction: column;
}

.watermark b {
  font-size: 21px;
  line-height: 24px;
}

.watermark small {
  font-size: 10px;
  line-height: 12px;
  font-weight: 600;
}

.watermark em {
  width: 19px;
  background-color: #d2384c;
  color: #fff;
  font-size: 10px;
  font-style: normal;
  line-height: 12px;
  text-align: center;
}

/* status bar */
.status {
  display: flex;
  height: 25px;
  border-top: 1px solid #c0c6dd;
  border-bottom: 2px solid #444;
  font-size: 18px;
  overflow: hidden;
}

.status > * {
  padding: 0 8px;
  border-right: 1px solid #c0c6dd;
  line-height: 27px;
}

.status > :first-child {
  padding-left: 7px;
}

.status .coord {
  width: 128px;
  text-align: center;
}

.status .layer {
  display: flex;
  gap: 3px;
  width: 248px;
  padding-left: 4px;
}

.status .layer i {
  width: 17px;
  height: 17px;
  margin-top: 4px;
  border: 1px solid #000;
  background-color: #ff00cc;
}

.status .on {
  background-color: #e2f1fb;
  font-weight: bold;
}

.status .tolerance {
  flex: 1;
  margin-right: 7px;
  padding-left: 1px;
}
```
FILE: scene.js
```
const layers = [
  ['最底下', '#000000'],
  ['底盘', '#ff0000'],
  ['底盘上', '#7d26cd'],
  ['开关', '#0000ff'],
  ['中架', '#008000'],
  ['小夹子', '#ffffff'],
  ['屁股', '#ffb700'],
  ['风扇...', '#00d0ff'],
  ['风扇框', '#ff00cc', true],
  ['图层 01', '#000000'],
  ['图层 02', '#000000']
];

const bulb = '<svg><use href="#bulb" fill="url(#g-on)"/></svg>';
const lock = '<svg><use href="#sunlock"/></svg>';
const tick = '<svg viewBox="0 0 20 20"><path d="M1 11l6 6L19 4" fill="none" stroke="#000" stroke-width="2"/></svg>';

document.getElementById('layer-rows').innerHTML = layers.map(([name, color, current]) => `
  <tr class="${current ? 'current' : ''}">
    <td>${name}</td>
    <td>${current ? tick : ''}</td>
    <td>${current ? '' : bulb}</td>
    <td>${current ? '' : lock}</td>
    <td><span class="swatch" style="background-color: ${color}"></span></td>
    <td><span class="dot"></span></td>
  </tr>`).join('');

const PINK = '#ff00cc';
const CYAN = '#00d0ff';
const parts = [];

function path(d, color, width = 1, extra = '') {
  parts.push(`<path d="${d}" fill="none" stroke="${color}" stroke-width="${width}" ${extra}/>`);
}

// construction plane: u and v run from -1 to 1, both axes meet at (944, 844)
function project(u, v) {
  const a = -0.2315 * u;
  const b = 0.4187 * v;
  const w = 1 + a + b;
  return `${((944 - 2471 * a + 1969 * b) / w).toFixed(1)} ${((844 - 411 * a - 373 * b) / w).toFixed(1)}`;
}

function drawGrid() {
  const cells = 70;
  let minor = '';
  let major = '';
  for (let i = -cells; i <= cells; i++) {
    const t = i / cells;
    const d = `M${project(t, -1)}L${project(t, 1)}M${project(-1, t)}L${project(1, t)}`;
    if (i % 5 === 0) major += d;
    else minor += d;
  }
  path(minor, '#8f959c', 1, 'opacity="0.75"');
  path(major, '#84868d', 1);
  path(`M${project(0, 0)}L${project(0, 1)}`, '#4b9b50', 1.5);
  path(`M${project(0, 0)}L${project(1, 0)}`, '#9b4a4c', 2);
}

function ring(cx, cy, rx, ry, color, offsets, width = 1) {
  offsets.forEach(([dx, dr]) => {
    parts.push(`<ellipse cx="${cx + dx}" cy="${cy}" rx="${rx + dr}" ry="${ry + dr}" fill="none" stroke="${color}" stroke-width="${width}"/>`);
  });
}

// smooth curve through points, moved sideways by o
function curve(points, o) {
  const p = points.map(([x, y], i) => {
    const [ax, ay] = points[Math.max(i - 1, 0)];
    const [bx, by] = points[Math.min(i + 1, points.length - 1)];
    const len = Math.hypot(bx - ax, by - ay) || 1;
    return [x - (by - ay) / len * o, y + (bx - ax) / len * o];
  });
  let d = `M${p[0]}`;
  for (let i = 0; i < p.length - 1; i++) {
    const p0 = p[Math.max(i - 1, 0)];
    const p3 = p[Math.min(i + 2, p.length - 1)];
    d += `C${p[i][0] + (p[i + 1][0] - p0[0]) / 6} ${p[i][1] + (p[i + 1][1] - p0[1]) / 6} `
      + `${p[i + 1][0] - (p3[0] - p[i][0]) / 6} ${p[i + 1][1] - (p3[1] - p[i][1]) / 6} ${p[i + 1]}`;
  }
  return d;
}

function spoke(points, offsets = [-5, -3.6, -1.5, 0, 2.6, 4, 5.2]) {
  offsets.forEach(o => path(curve(points, o), PINK, 1.2));
}

function closedPath(points) {
  return curve([...points, points[0]], 0) + 'Z';
}

function drawBlades() {
  const top = closedPath([[925, 350], [947, 348], [977, 357], [1007, 373], [1040, 397], [1066, 429], [1063, 437],
    [1043, 448], [1003, 462], [973, 470], [957, 480], [940, 502], [927, 504], [910, 492], [890, 472], [880, 447],
    [873, 423], [873, 403], [883, 383], [897, 370]]);
  const side = closedPath([[970, 543], [990, 523], [1013, 508], [1040, 503], [1057, 508], [1070, 527], [1093, 563],
    [1098, 583], [1097, 607], [1088, 633], [1073, 660], [1053, 683], [1033, 700], [1022, 707], [1008, 687],
    [993, 653], [977, 613], [953, 583], [953, 570], [963, 553]]);
  parts.push(`<clipPath id="blade-top"><path d="${top}"/></clipPath><clipPath id="blade-side"><path d="${side}"/></clipPath>`);

  let d = '';
  for (let y = 300; y < 388; y += 11) d += `M860 ${y}L1080 ${y + 52}`;
  for (let i = 0; i < 12; i++) d += `M860 ${388 + i * 3}L1080 ${452 + i * 4}`;
  for (let y = 424; y < 505; y += 3) d += `M860 ${y}L1080 ${y + 48}`;
  for (let x = 925; x < 1110; x += 26) d += `M${x} 340Q${x - 12} 400 ${x - 34} 520`;
  path(d, CYAN, 1.2, 'clip-path="url(#blade-top)"');
  path('M925 340Q913 400 891 465M951 340Q939 400 917 465M977 340Q965 400 943 465M1003 340Q991 400 969 480', CYAN, 2, 'clip-path="url(#blade-top)"');
  parts.push(`<path d="M888 445Q910 450 935 460T975 464Q958 470 948 482L938 484Q910 478 890 468z" fill="${CYAN}" clip-path="url(#blade-top)" opacity="0.9"/>`);
  path(top, CYAN, 2);

  d = '';
  for (let x = 965; x < 1060; x += 3) d += `M${x} 500Q${x - 4} 580 ${x - 34} 710`;
  for (let x = 1060; x < 1140; x += 9) d += `M${x} 500Q${x - 2} 600 ${x - 30} 710`;
  for (let y = 500; y < 720; y += 15) d += `M1020 ${y}L1110 ${y + 22}`;
  for (let y = 560; y < 660; y += 15) d += `M950 ${y}L1030 ${y + 20}`;
  path(d, CYAN, 1.2, 'clip-path="url(#blade-side)"');
  path('M1040 500Q1044 560 1028 610T1014 660', CYAN, 9, 'clip-path="url(#blade-side)" opacity="0.85"');
  path(side, CYAN, 2);
}

function drawFan() {
  const wire = [[-1, 2], [0, 0], [0, -2], [1, -4]];

  // back cage
  ring(934, 552, 105, 121, PINK, wire, 1.3);
  ring(937, 552, 138, 154, PINK, wire, 1.3);
  ring(936, 548, 171, 190, PINK, wire, 1.3);
  ring(928, 548, 191, 213, PINK, [[0, 2], [0, 0], [1, -2], [3, 1], [4, -4], [2, -1]], 1.3);
  drawBlades();

  // front cage
  ring(879, 548, 148, 165, PINK, wire, 1.3);
  ring(888, 545, 181, 201, PINK, wire, 1.3);
  ring(913, 550, 211, 225, PINK, [[0, 0], [2, -2], [-1, -4], [0, 2], [3, -5]], 1.3);

  // rim
  ring(919, 551, 220, 241, '#000', [[0, 0], [0, -1.5], [-1, -3]], 1.5);
  ring(915, 553, 215, 237, '#000', [[0, 0], [0, 2], [1, -2]], 1.2);

  spoke([[952, 328], [953, 314], [942, 311], [931, 316], [916, 338], [903, 370], [890, 420], [880, 480], [875, 530]]);
  spoke([[800, 374], [795, 364], [784, 361], [778, 372], [784, 400], [803, 440], [832, 488], [864, 537]]);
  spoke([[695, 511], [740, 520], [813, 538], [864, 549]], [-4, -3, -1, 0, 2, 3]);
  spoke([[893, 546], [960, 561], [1027, 574], [1143, 596]], [-4, -3, -1, 0, 2, 3]);
  spoke([[1013, 675], [1027, 710], [1044, 748], [1035, 756], [1012, 746], [973, 699], [927, 630], [890, 558]]);
  spoke([[935, 583], [927, 633], [907, 707], [892, 757], [875, 786]], [-5, -4, -2, 0, 2, 4]);
  spoke([[913, 575], [882, 600], [847, 620], [790, 655], [750, 679]], [-4, -3, -1, 0, 2, 3]);

  // clips where the spokes meet the rim
  path('M694 509h28M694 511l27 5M695 515l24 5M1120 588l24 6M1122 598l21 2M1143 592v8', PINK, 3);
  path('M870 760l12 4-4 24-12-4zM874 764l-2 20M753 666v14M798 366l4 12', PINK, 2.5);
  path('M1022 735l12 4M1018 742l14 4M1038 734l6 18', PINK, 5);

  // hub
  ring(872, 548, 62, 66, '#000', [[0, 0], [2, -1], [-1, -2], [1, -5]], 1.4);
  ring(870, 549, 43, 46, '#000', [[0, 0], [0, -2], [1, -3]], 1.8);
  ring(870, 549, 34, 38, '#000', [[0, 0], [0, -2]], 1.8);
  path('M817 535L931 562M817 538L931 565M889 488L853 609M893 500L860 610', '#000', 1.3);
  path('M848 537C841 554 848 561 862 555C876 548 885 541 899 535C888 558 872 568 856 563C838 558 838 542 848 537L854 548', '#000', 2.5);
}

function drawAxes() {
  path('M147.5 852V891L187 902M147.5 891L168 873', '#666', 1);
  [['z', 151, 853], ['y', 172, 871], ['x', 190, 904]].forEach(([t, x, y]) => {
    parts.push(`<text x="${x}" y="${y}" font-size="20" fill="#5c5f63">${t}</text>`);
  });
}

drawGrid();
drawFan();
drawAxes();
document.getElementById('scene').innerHTML = parts.join('');
```
